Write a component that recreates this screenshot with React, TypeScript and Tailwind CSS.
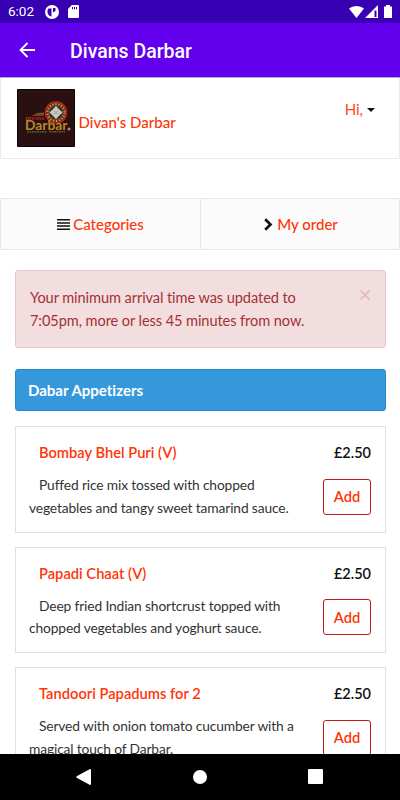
const dishes = [
  { name: "Bombay Bhel Puri (V)", price: "£2.50", lines: ["Puffed rice mix tossed with chopped", "vegetables and tangy sweet tamarind sauce."] },
  { name: "Papadi Chaat (V)", price: "£2.50", lines: ["Deep fried Indian shortcrust topped with", "chopped vegetables and yoghurt sauce."] },
  { name: "Tandoori Papadums for 2", price: "£2.50", lines: ["Served with onion tomato cucumber with a", "magical touch of Darbar."] },
]

const StatusBar = () => {
  return (
    <div className="flex h-[23px] shrink-0 items-center bg-[#3700b3] pl-2 font-['Roboto',sans-serif] text-[13.5px] text-white">
      <span className="w-[37px]">6:02</span>
      <svg width="14" height="14" viewBox="0 0 14 14">
        <circle cx="7" cy="7" r="7" fill="#fff" />
        <path d="M3.500 3.500H6.500V11.500A5 5 0 0 1 3.500 3.500z M8 3h2.500v3l-2.500 1.500z" fill="#3700b3" />
      </svg>
      <svg className="ml-[9px]" width="11" height="13" viewBox="0 0 11 13">
        <path d="M3.800 0H10a1 1 0 0 1 1 1v11a1 1 0 0 1-1 1H1a1 1 0 0 1-1-1V4z" fill="#fff" />
        <path d="M4 2h1v2.200H4z M6 2h1v2.200H6z M8 2h1v2.200H8z" fill="#3700b3" />
      </svg>
      <svg className="ml-auto mr-[7px]" width="44" height="14" viewBox="0 0 44 14">
        <path d="M0 3.500C4.500 0 10.500 0 15 3.500L7.500 13z" fill="#fff" />
        <path d="M29 0v13H16z" fill="#fff" />
        <path d="M25.500 5.500h2v6.500h-2z" fill="#3700b3" />
        <path d="M37 0h4v1.500h2V13h-8V1.500h2z" fill="#fff" />
      </svg>
    </div>
  )
}

const AppBar = () => {
  return (
    <div className="flex h-[55px] shrink-0 items-center border-b border-[#b9a5de] bg-[#6200ee] pl-[19px] text-white">
      <svg width="16" height="16" viewBox="0 0 16 16" fill="none" stroke="#fff" strokeWidth="1.800">
        <path d="M16 8H1.500 M8.500 1L1.500 8l7 7" />
      </svg>
      <h1 className="ml-[35px] mt-1 font-['Roboto',sans-serif] text-[19.5px] font-medium">Divans Darbar</h1>
    </div>
  )
}

const Logo = () => {
  return (
    <svg width="58" height="58" viewBox="0 0 58 58">
      <rect width="58" height="58" rx="1" fill="#080304" />
      <rect x="1" y="1" width="56" height="56" fill="#2b1011" />
      <path d="M14 27q6-3 13-3v3z" fill="#a52620" />
      <path d="M16 25.500q6-2 11-2v1.500z" fill="#3d7b37" />
      <circle cx="39" cy="23.500" r="10.500" fill="#6f251b" stroke="#b8291e" strokeWidth="1.500" />
      <circle cx="39" cy="23.500" r="8.500" fill="none" stroke="#c5a44a" strokeWidth="1.800" strokeDasharray="1.400 1.600" />
      <circle cx="39" cy="23.500" r="6.800" fill="#451514" stroke="#397238" strokeWidth="1" />
      <path d="M39 17l6.500 6.500-6.500 6.500-6.500-6.500z" fill="#c9c8c4" />
      <path d="M37 21.500l4 4m0-4l-4 4" stroke="#8c8b88" strokeWidth=".7" />
      <text x="8.500" y="31" fill="#d32d24" fontFamily="Liberation Serif, serif" fontSize="4.500" fontWeight="700" textLength="18.500" lengthAdjust="spacingAndGlyphs">DIVANS</text>
      <text x="8" y="41" fill="#b8862b" fontFamily="Lato, sans-serif" fontSize="12.500" fontWeight="700" textLength="42.500" lengthAdjust="spacingAndGlyphs">Darbar</text>
      <path d="M10 42.800h20" stroke="#3c7438" strokeWidth="1.200" strokeDasharray="2 .5" />
      <path d="M32 42.800h16" stroke="#83762d" strokeWidth="1" strokeDasharray="2 .5" />
      <circle cx="52" cy="40" r="1.500" fill="#9b8e8c" />
    </svg>
  )
}

const Header = () => {
  return (
    <header className="flex h-[81px] shrink-0 border border-t-0 border-[#ececec] pl-[15.500px] pt-[11px]">
      <Logo />
      <span className="ml-1 mt-[22px] text-[15px] leading-[22px] font-medium text-[#ff3507]">Divan's Darbar</span>
      <span className="ml-auto mr-6 mt-[9px] flex h-[22px] items-center text-[15px] text-[#ff4a1a]">
        Hi,
        <svg className="ml-1 mt-0.5" width="8" height="4" viewBox="0 0 8 4">
          <path d="M0 0h8L4 4z" fill="#111" />
        </svg>
      </span>
    </header>
  )
}

const Tabs = () => {
  return (
    <div className="mt-[39px] flex h-[52px] shrink-0 border border-[#e7e7e7] bg-[#fbfbfb] text-[15px] font-medium text-[#ff3507]">
      <div className="flex w-[200px] items-center justify-center gap-[3px] border-r border-[#e7e7e7]">
        <svg width="13" height="11" viewBox="0 0 13 11" stroke="#111" strokeWidth="1.500">
          <path d="M0 .8h13M0 4h13M0 7.100h13M0 10.200h13" />
        </svg>
        Categories
      </div>
      <div className="flex flex-1 items-center justify-center gap-1 pl-0.5">
        <svg width="9" height="13" viewBox="0 0 9 13" fill="none" stroke="#111" strokeWidth="2.700">
          <path d="M1.200 1.200L6.500 6.500l-5.300 5.300" />
        </svg>
        My order
      </div>
    </div>
  )
}

const Alert = () => {
  return (
    <div className="flex h-[78px] items-start justify-between rounded-[3px] border border-[#e9c6cc] bg-[#f2dede] pl-[14px] pr-[15px] pt-[15px] text-[14.600px] leading-[23px] tracking-[-0.09px] text-[#a33236]">
      <p className="whitespace-nowrap">
        Your minimum arrival time was updated to
        <br />
        7:05pm, more or less 45 minutes from now.
      </p>
      <svg className="mt-1" width="10" height="10" viewBox="0 0 10 10" stroke="#e1babb" strokeWidth="1.700">
        <path d="M.5.5l9 9m0-9l-9 9" />
      </svg>
    </div>
  )
}

const Dish = ({ name, price, lines }: (typeof dishes)[number]) => {
  return (
    <article className="flex h-[106.500px] shrink-0 justify-between border border-[#e1e1e1] pl-[13px] pr-3.5 pt-[14px] whitespace-nowrap">
      <div>
        <h3 className="pl-2.5 text-[14.700px] leading-[23px] font-semibold text-[#ff3507]">{name}</h3>
        <p className="mt-[10px] indent-2.5 text-[13.800px] leading-[22.500px] tracking-[-0.14px] text-[#333]">
          {lines[0]}
          <br />
          {lines[1]}
        </p>
      </div>
      <div className="flex flex-col items-end">
        <span className="text-[14.500px] leading-[23px] font-semibold text-[#111]">{price}</span>
        <button className="mt-[14.500px] h-9 w-[48px] rounded-[3px] border border-[#c61813] text-[14.700px] font-semibold text-[#ff3507]">Add</button>
      </div>
    </article>
  )
}

const NavBar = () => {
  return (
    <div className="flex h-[46.500px] shrink-0 items-center justify-between bg-black pl-[76px] pr-[77px]">
      <svg width="15" height="16" viewBox="0 0 15 16" fill="#fff">
        <path d="M14 0q1 0 1 1v14q0 1-1 1L.7 8.800q-1-.8 0-1.600z" />
      </svg>
      <div className="h-3.5 w-3.5 rounded-full bg-white" />
      <div className="h-[15px] w-[15px] rounded-[1px] bg-white" />
    </div>
  )
}

const App = () => {
  return (
    <div className="flex h-[800px] w-[400px] flex-col overflow-hidden bg-white font-['Lato',sans-serif] [font-variant-ligatures:none]">
      <StatusBar />
      <AppBar />
      <main className="flex min-h-0 flex-1 flex-col overflow-hidden">
        <Header />
        <Tabs />
        <div className="pl-[15px] pr-3.5 pt-5">
          <Alert />
          <h2 className="mt-[21px] flex h-[42px] items-center rounded-[3px] border border-[#238acb] bg-[#3598dc] pl-3 text-[15px] font-bold text-white">
            Dabar Appetizers
          </h2>
          <div className="mt-[15px] flex flex-col gap-[14px]">
            {dishes.map((dish) => (
              <Dish key={dish.name} {...dish} />
            ))}
          </div>
        </div>
      </main>
      <NavBar />
    </div>
  )
}
export default App
